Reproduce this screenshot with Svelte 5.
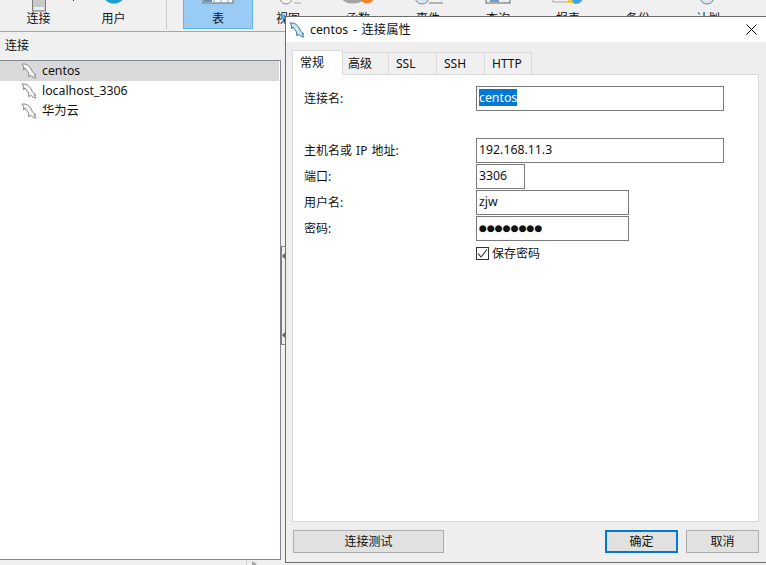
<script>
    const dolphin = "M1 1 L4 1 C8 2 10 5 11 8 C12 10 14 11 15 12 L13 12 L15 15 C13 15 11 14 9.5 12 L8 14 L7.5 10 C6.5 8 5 7 4 5 L2.5 7 L2.8 4 Z";
    const connections = [
        { name: "centos", selected: true },
        { name: "localhost_3306" },
        { name: "华为云" }
    ];
    const tabs = ["常规", "高级", "SSL", "SSH", "HTTP"];
</script>

<div class="app">
    <div class="toolbar">
        <div class="tool wide first">
            <svg viewBox="0 0 32 12" width="32" height="12"><rect x="9.5" y="-4" width="13" height="15" fill="#c9c9c9" stroke="#7d7d7d"/><rect x="11" y="7" width="10" height="3" fill="#eee"/></svg>
            <span>连接</span>
        </div>
        <div class="tool wide">
            <svg viewBox="0 0 32 12" width="32" height="12"><circle cx="16" cy="-8" r="11.5" fill="#1d9fd0"/></svg>
            <span>用户</span>
        </div>
        <div class="sep"></div>
        <div class="tool active">
            <svg viewBox="0 0 32 12" width="32" height="12"><rect x="1" y="-4" width="30" height="7" fill="#f4f7f9" stroke="#6b6f73"/><path d="M5 -1V3M12 -1V3M19 -1V3M26 -1V3" stroke="#7fa9c9"/><rect x="2" y="0" width="8" height="2" fill="#5d93bb"/></svg>
            <span>表</span>
        </div>
        <div class="tool">
            <svg viewBox="0 0 32 12" width="32" height="12"><circle cx="14" cy="-2" r="6" fill="#f2f2f2" stroke="#8b8b8b"/><path d="M22 3h7" stroke="#a8a8a8"/></svg>
            <span>视图</span>
        </div>
        <div class="tool">
            <svg viewBox="0 0 32 12" width="32" height="12"><ellipse cx="11" cy="-2" rx="11" ry="5.5" fill="#a4a4a4"/><ellipse cx="25" cy="-3" rx="7" ry="6.5" fill="#ee8027"/></svg>
            <span>函数</span>
        </div>
        <div class="tool">
            <svg viewBox="0 0 32 12" width="32" height="12"><circle cx="10" cy="-3" r="7" fill="#dfe7ee" stroke="#6f8aa0"/><path d="M17 3h14" stroke="#777"/></svg>
            <span>事件</span>
        </div>
        <div class="tool">
            <svg viewBox="0 0 32 12" width="32" height="12"><rect x="4" y="-4" width="24" height="7" fill="#e9eef2" stroke="#666"/><rect x="8" y="-1" width="9" height="3" fill="#6f9cc4"/></svg>
            <span>查询</span>
        </div>
        <div class="tool">
            <svg viewBox="0 0 32 12" width="32" height="12"><rect x="1" y="-4" width="20" height="6" fill="#f1f1f1" stroke="#aaa"/><circle cx="24" cy="-3" r="7" fill="#3fa5e0"/><path d="M14 3 L18 -2 L22 3 Z" fill="#f2c53a"/></svg>
            <span>报表</span>
        </div>
        <div class="tool">
            <svg viewBox="0 0 32 12" width="32" height="12"></svg>
            <span>备份</span>
        </div>
        <div class="tool">
            <svg viewBox="0 0 32 12" width="32" height="12"><circle cx="15" cy="-3" r="7" fill="#dfe7ee" stroke="#6f8296"/></svg>
            <span>计划</span>
        </div>
    </div>

    <div class="main">
        <div class="side">
            <div class="side-title">连接</div>
            <div class="tree">
                {#each connections as c}
                    <div class="tree-row" class:selected={c.selected}>
                        <svg class="dolphin" viewBox="0 0 16 16" width="16" height="16"><path d={dolphin} fill="#f6f6f6" stroke="#8a8a8a"/></svg>
                        <span>{c.name}</span>
                    </div>
                {/each}
            </div>
        </div>
        <div class="splitter">
            <div class="grip">
                <i></i>
                <i></i>
            </div>
        </div>
    </div>

    <div class="status"><b></b><em></em></div>

    <div class="dialog">
        <div class="titlebar">
            <svg class="dolphin" viewBox="0 0 16 16" width="16" height="16"><path d={dolphin} fill="#cfe6ee" stroke="#2f7f9f"/></svg>
            <span class="title">centos - 连接属性</span>
            <svg class="close" viewBox="0 0 11 11" width="11" height="11"><path d="M0.5 0.5L10.5 10.5M10.5 0.5L0.5 10.5" stroke="#000" fill="none"/></svg>
        </div>
        <div class="body">
            <div class="tabs">
                {#each tabs as t, i}
                    <div class="tab" class:current={i === 0}>{t}</div>
                {/each}
            </div>
            <div class="pane">
                <div class="row"><label for="conn">连接名:</label><div id="conn" class="field long"><mark>centos</mark></div></div>
                <div class="gap"></div>
                <div class="row"><label for="host">主机名或 IP 地址:</label><div id="host" class="field long">192.168.11.3</div></div>
                <div class="row"><label for="port">端口:</label><div id="port" class="field port">3306</div></div>
                <div class="row"><label for="user">用户名:</label><div id="user" class="field mid">zjw</div></div>
                <div class="row"><label for="pass">密码:</label><div id="pass" class="field mid dots">●●●●●●●●</div></div>
                <div class="check">
                    <span class="box"><svg viewBox="0 0 11 11" width="11" height="11"><path d="M1 5.5L4 9L10 1.5" fill="none" stroke="#333" stroke-width="1.1"/></svg></span>
                    <span>保存密码</span>
                </div>
            </div>
            <div class="buttons">
                <div class="btn test">连接测试</div>
                <div class="spacer"></div>
                <div class="btn primary">确定</div>
                <div class="btn">取消</div>
            </div>
        </div>
    </div>
</div>

<style>
    :global(body) {
        margin: 0;
        overflow: hidden;
    }
    .app {
        position: relative;
        width: 766px;
        height: 565px;
        overflow: hidden;
        background: #f0f0f0;
        color: #111;
        font-family: "Noto Sans", "Noto Sans CJK SC", sans-serif;
        font-size: 12px;
    }
    .toolbar {
        display: flex;
        height: 31px;
        padding-left: 1px;
        background: #f0f0f0;
        border-bottom: 1px solid #a5a5a5;
    }
    .tool {
        width: 70px;
        height: 29px;
        display: flex;
        flex-direction: column;
        align-items: center;
        flex: none;
        box-sizing: border-box;
        position: relative;
    }
    .tool.wide {
        width: 75px;
    }
    .tool.first::after {
        content: "";
        position: absolute;
        left: 72px;
        top: 0;
        width: 1px;
        height: 1px;
        background: #333;
    }
    .tool span {
        line-height: 16px;
        margin-top: -1px;
    }
    .tool svg {
        overflow: hidden;
        display: block;
    }
    .tool.active {
        background: #99cbf5;
        border: 1px solid #62b3f2;
        border-top: none;
    }
    .sep {
        width: 1px;
        height: 29px;
        background: #c8c8c8;
        margin: 0 16px 0 15px;
        flex: none;
    }
    .main {
        display: flex;
        height: 528px;
    }
    .side {
        width: 281px;
        flex: none;
        display: flex;
        flex-direction: column;
    }
    .side-title {
        height: 28px;
        line-height: 27px;
        padding-left: 5px;
        font-size: 12px;
    }
    .tree {
        flex: 1;
        background: #fff;
        border-top: 1px solid #828790;
        border-right: 1px solid #828790;
        border-bottom: 1px solid #828790;
    }
    .tree-row {
        display: flex;
        align-items: center;
        gap: 5px;
        height: 20px;
        padding-left: 21px;
        margin-right: 1px;
        font-size: 12.3px;
    }
    .tree-row span {
        line-height: 20px;
        height: 20px;
    }
    .tree-row.selected {
        background: #d9d9d9;
    }
    .dolphin {
        flex: none;
    }
    .splitter {
        position: relative;
        width: 5px;
        flex: none;
    }
    .grip {
        position: absolute;
        left: -1px;
        top: 214px;
        width: 6px;
        height: 99px;
        border-top: 1px solid #828790;
        border-bottom: 1px solid #828790;
        border-left: 2px solid #7b7b85;
        box-sizing: border-box;
    }
    .grip i {
        position: absolute;
        left: 0;
        width: 0;
        height: 0;
        border-top: 4px solid transparent;
        border-bottom: 4px solid transparent;
        border-right: 4px solid #666;
    }
    .grip i:first-child {
        top: 5px;
    }
    .grip i:last-child {
        bottom: 5px;
    }
    .status {
        position: relative;
        height: 5px;
    }
    .status b {
        position: absolute;
        left: 246px;
        top: 0;
        width: 1px;
        height: 5px;
        background: #d0d0d0;
    }
    .status em {
        position: absolute;
        left: 252px;
        top: 1px;
        width: 0;
        height: 0;
        border-top: 3px solid transparent;
        border-bottom: 3px solid transparent;
        border-left: 5px solid #aaa;
    }
    .dialog {
        position: absolute;
        left: 285px;
        top: 16px;
        width: 490px;
        height: 547px;
        box-sizing: border-box;
        background: #eeeeee;
        border: 1px solid #6e6e6e;
        display: flex;
        flex-direction: column;
    }
    .titlebar {
        height: 25px;
        flex: none;
        background: #fff;
        display: flex;
        align-items: center;
        padding-left: 3px;
        position: relative;
    }
    .title {
        margin-left: 5px;
        padding-bottom: 2px;
        font-size: 12.3px;
        word-spacing: 1.5px;
    }
    .close {
        position: absolute;
        left: 460px;
        top: 7px;
    }
    .body {
        flex: 1;
        display: flex;
        flex-direction: column;
        padding: 8px 0 0 6px;
        width: 467px;
    }
    .tabs {
        display: flex;
        align-items: flex-end;
        height: 25px;
        margin-bottom: -1px;
        position: relative;
    }
    .tab {
        height: 23px;
        line-height: 22px;
        padding-left: 7px;
        box-sizing: border-box;
        background: #f0f0f0;
        border: 1px solid #d9d9d9;
        border-left: none;
        font-size: 12px;
        width: 47px;
    }
    .tab:nth-child(2) {
        width: 46px;
        padding-left: 5px;
    }
    .tab:nth-child(3) {
        width: 48px;
    }
    .tab:nth-child(4) {
        width: 48px;
    }
    .tab.current {
        height: 25px;
        width: 51px;
        line-height: 23px;
        background: #fff;
        border-left: 1px solid #d9d9d9;
        border-bottom: none;
    }
    .pane {
        width: 467px;
        height: 448px;
        box-sizing: border-box;
        background: #fff;
        border: 1px solid #d9d9d9;
        padding: 11px 0 0 11px;
        display: flex;
        flex-direction: column;
        gap: 1px;
        flex: none;
    }
    .row {
        display: flex;
        align-items: center;
        height: 25px;
    }
    .gap {
        height: 25px;
    }
    label {
        width: 172px;
        flex: none;
        font-size: 12px;
        padding-bottom: 2px;
        word-spacing: 1px;
    }
    .field {
        height: 25px;
        line-height: 22px;
        box-sizing: border-box;
        border: 1px solid #7a7a7a;
        padding-left: 2px;
        font-size: 12.3px;
        background: #fff;
    }
    .long {
        width: 248px;
    }
    .mid {
        width: 153px;
    }
    .port {
        width: 49px;
    }
    .dots {
        font-family: "DejaVu Sans", sans-serif;
        font-size: 9.1px;
    }
    mark {
        background: #0078d7;
        color: #fff;
        display: inline-block;
        line-height: 17px;
    }
    .check {
        display: flex;
        align-items: center;
        gap: 3px;
        margin: 3px 0 0 172px;
        height: 16px;
    }
    .box {
        width: 13px;
        height: 13px;
        box-sizing: border-box;
        border: 1px solid #333;
        display: flex;
        align-items: center;
        justify-content: center;
    }
    .buttons {
        display: flex;
        gap: 8px;
        margin: 8px 0 0 1px;
    }
    .spacer {
        width: 145px;
    }
    .btn {
        width: 73px;
        height: 23px;
        line-height: 22px;
        text-align: center;
        box-sizing: border-box;
        background: #e1e1e1;
        border: 1px solid #adadad;
        flex: none;
    }
    .btn.test {
        width: 151px;
    }
    .btn.primary {
        border: 2px solid #0078d7;
        line-height: 20px;
    }
</style>
